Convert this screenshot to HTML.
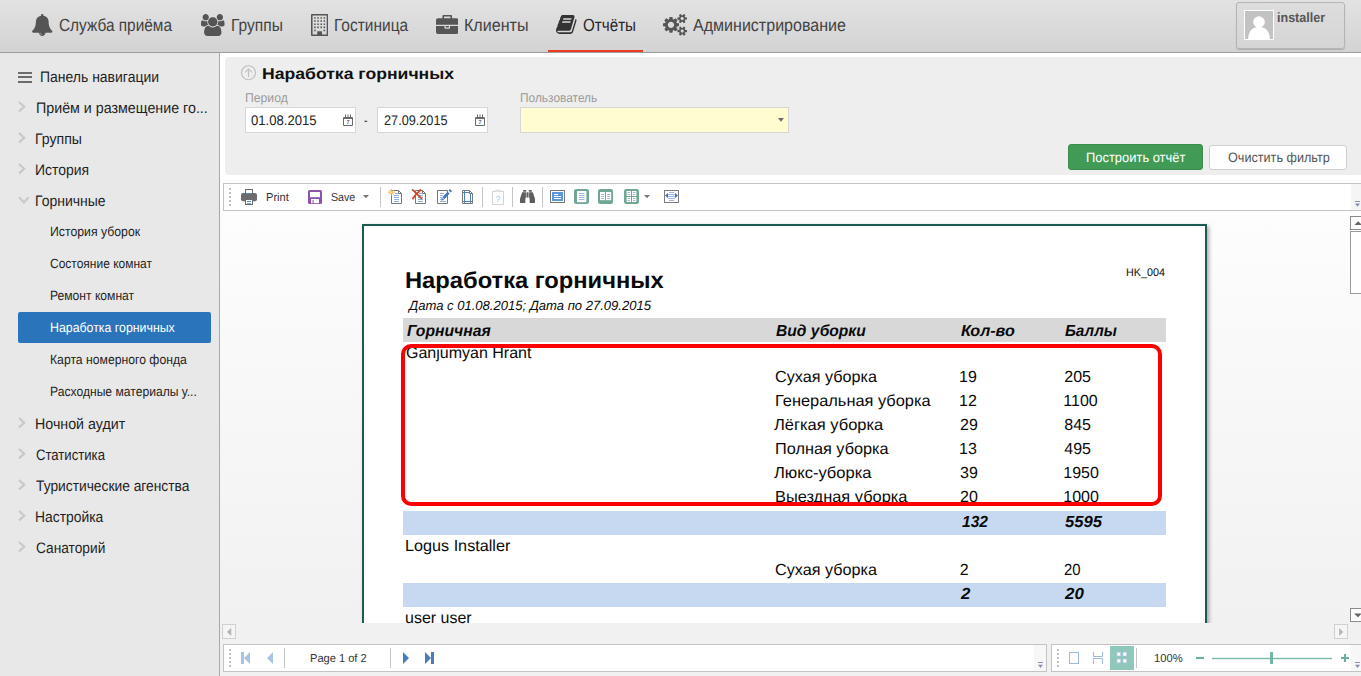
<!DOCTYPE html>
<html lang="ru">
<head>
<meta charset="utf-8">
<title>Наработка горничных</title>
<style>
*{box-sizing:border-box;margin:0;padding:0}
html,body{width:1361px;height:676px;overflow:hidden;background:#fff}
body{position:relative;font-family:"Liberation Sans",sans-serif;color:#222;font-size:14px}
.abs{position:absolute}
.t{position:absolute;white-space:nowrap;line-height:1;transform-origin:0 50%;text-rendering:geometricPrecision}
#top{left:0;top:0;width:1361px;height:53px;background:linear-gradient(#e2e2e2,#d3d3d3);border-bottom:1px solid #9d9d9d}
#actline{left:548px;top:50px;width:95px;height:2px;background:#ea3c22}
#user{left:1236px;top:2px;width:109px;height:47px;border:1px solid #b4b4b4;border-radius:3px;background:linear-gradient(#dddddd,#d5d5d5);box-shadow:0 1px 1px rgba(0,0,0,.18)}
#avatar{left:1244px;top:10px;width:30px;height:30px;background:#c2c2c2;border:1px solid #fff;overflow:hidden}
#side{left:0;top:53px;width:220px;height:623px;background:#e8e8e8;border-right:1px solid #a9a9a9}
#sel{left:18px;top:312px;width:193px;height:31px;background:#2a74bb;border-radius:2px}
#filter{left:225px;top:57px;width:1140px;height:118px;background:#eeeeee;border-radius:4px}
.inp{background:#fff;border:1px solid #d6d6d6;height:26px;top:107px}
.btn{top:144px;height:26px;border-radius:3px}
#viewer{left:220px;top:211px;width:1141px;height:465px;background:linear-gradient(#fdfdfd 0,#f1f1f1 412px,#f1f1f1 100%)}
.tb{background:#fff;border:1px solid #c3c3c3}
#canvas{left:222px;top:211px;width:1128px;height:412px;overflow:hidden}
#page{left:140px;top:13px;width:845px;height:600px;background:#fff;border:2px solid #1b5b52;box-shadow:2px 2px 4px rgba(0,0,0,.32)}
.sep{width:1px;background:#c8c8c8}
.grip{width:2px;background:repeating-linear-gradient(#b5b5b5 0 2px,transparent 2px 4px)}
.sb{background:#fff;border:1px solid #c9c9c9}
</style>
</head>
<body>
<div id="top" class="abs"></div>
<div id="actline" class="abs"></div>
<div id="user" class="abs"></div>
<div id="avatar" class="abs"><svg width="28" height="28" viewBox="0 0 28 28"><circle cx="14" cy="11" r="5.8" fill="#fff"/><path d="M3 30 C3 18 9 16 14 16 C19 16 25 18 25 30Z" fill="#fff"/></svg></div>
<div id="side" class="abs"></div>
<div id="sel" class="abs"></div>
<div id="filter" class="abs"></div>
<div class="abs inp" style="left:245px;width:111px"></div>
<div class="abs inp" style="left:377px;width:111px"></div>
<div class="abs inp" style="left:520px;width:269px;background:#fffccf"></div>
<div class="abs btn" style="left:1068px;width:135px;background:#419b57;border:1px solid #3b8d4e"></div>
<div class="abs btn" style="left:1209px;width:138px;background:#fff;border:1px solid #cfcfcf;top:145px;height:25px"></div>
<!-- viewer -->
<div id="viewer" class="abs"></div>
<div class="abs tb" style="left:223px;top:183px;width:1141px;height:28px"></div>
<div class="abs" style="left:1351px;top:184px;width:10px;height:26px;background:#f5f5f5"></div>
<div id="canvas" class="abs">
  <div id="page" class="abs"></div>
</div>
<!-- report backgrounds -->
<div class="abs" style="left:403px;top:318px;width:763px;height:24px;background:#d8d8d8"></div>
<div class="abs" style="left:403px;top:511px;width:763px;height:24px;background:#c6d9f0"></div>
<div class="abs" style="left:403px;top:583px;width:763px;height:24px;background:#c6d9f0"></div>
<!-- scrollbars -->
<div class="abs sb" style="left:1350px;top:216px;width:16px;height:14px;border-color:#8c8c8c"></div>
<div class="abs sb" style="left:1350px;top:231px;width:16px;height:63px;border-color:#9a9a9a"></div>
<div class="abs sb" style="left:1350px;top:608px;width:16px;height:14px;border-color:#8c8c8c"></div>
<div class="abs sb" style="left:222px;top:624px;width:14px;height:15px;background:#f5f5f5;border-color:#d0d0d0"></div>
<div class="abs sb" style="left:1334px;top:624px;width:14px;height:15px;background:#f5f5f5;border-color:#d0d0d0"></div>
<!-- bottom toolbars -->
<div class="abs tb" style="left:223px;top:644px;width:824px;height:28px"></div>
<div class="abs" style="left:1034px;top:645px;width:12px;height:26px;background:#f7f7f7"></div>
<div class="abs tb" style="left:1051px;top:644px;width:314px;height:28px"></div>
<div class="abs" style="left:1351px;top:645px;width:10px;height:26px;background:#f7f7f7"></div>
<div class="abs" style="left:1110px;top:646px;width:24px;height:24px;background:#8fc7ba"></div>
<svg class="abs" style="left:32px;top:13.75px;width:20.5px;height:22.0px" viewBox="64 -1536 1664 1792" preserveAspectRatio="none"><path transform="scale(1,-1)" fill="#555" d="M912 -160C912 -169 905 -176 896 -176C799 -176 720 -97 720 0C720 9 727 16 736 16C745 16 752 9 752 0C752 -79 817 -144 896 -144C905 -144 912 -151 912 -160ZM1728 128C1580 253 1408 477 1408 960C1408 1152 1249 1362 984 1401C989 1413 992 1426 992 1440C992 1493 949 1536 896 1536C843 1536 800 1493 800 1440C800 1426 803 1413 808 1401C543 1362 384 1152 384 960C384 477 212 253 64 128C64 58 122 0 192 0H640C640 -141 755 -256 896 -256C1037 -256 1152 -141 1152 0H1600C1670 0 1728 58 1728 128Z"/></svg>
<svg class="abs" style="left:201px;top:13.75px;width:23.599999999999994px;height:22.0px" viewBox="-0.006105489287108412 -1536 1920.0122109785743 1792" preserveAspectRatio="none"><path transform="scale(1,-1)" fill="#555" d="M593 640C541 715 512 805 512 896C512 918 514 940 517 962C474 947 430 939 384 939C249 939 145 1024 124 1024C-3 1024 0 752 0 671C0 560 94 512 194 512H328C395 592 489 637 593 640ZM1664 3C1664 229 1611 576 1318 576C1284 576 1160 437 960 437C760 437 636 576 602 576C309 576 256 229 256 3C256 -159 363 -256 523 -256H1397C1557 -256 1664 -159 1664 3ZM640 1280C640 1421 525 1536 384 1536C243 1536 128 1421 128 1280C128 1139 243 1024 384 1024C525 1024 640 1139 640 1280ZM1344 896C1344 1108 1172 1280 960 1280C748 1280 576 1108 576 896C576 684 748 512 960 512C1172 512 1344 684 1344 896ZM1920 671C1920 752 1923 1024 1796 1024C1775 1024 1671 939 1536 939C1490 939 1446 947 1403 962C1406 940 1408 918 1408 896C1408 805 1379 715 1327 640C1431 637 1525 592 1592 512H1726C1826 512 1920 560 1920 671ZM1792 1280C1792 1421 1677 1536 1536 1536C1395 1536 1280 1421 1280 1280C1280 1139 1395 1024 1536 1024C1677 1024 1792 1139 1792 1280Z"/></svg>
<svg class="abs" style="left:310.75px;top:13.75px;width:17.25px;height:22.0px" viewBox="0 -1536 1408 1792" preserveAspectRatio="none"><path transform="scale(1,-1)" fill="#555" d="M384 224C384 241 369 256 352 256H288C271 256 256 241 256 224V160C256 143 271 128 288 128H352C369 128 384 143 384 160ZM384 480C384 497 369 512 352 512H288C271 512 256 497 256 480V416C256 399 271 384 288 384H352C369 384 384 399 384 416ZM640 480C640 497 625 512 608 512H544C527 512 512 497 512 480V416C512 399 527 384 544 384H608C625 384 640 399 640 416ZM384 736C384 753 369 768 352 768H288C271 768 256 753 256 736V672C256 655 271 640 288 640H352C369 640 384 655 384 672ZM1152 224C1152 241 1137 256 1120 256H1056C1039 256 1024 241 1024 224V160C1024 143 1039 128 1056 128H1120C1137 128 1152 143 1152 160ZM896 480C896 497 881 512 864 512H800C783 512 768 497 768 480V416C768 399 783 384 800 384H864C881 384 896 399 896 416ZM640 736C640 753 625 768 608 768H544C527 768 512 753 512 736V672C512 655 527 640 544 640H608C625 640 640 655 640 672ZM384 992C384 1009 369 1024 352 1024H288C271 1024 256 1009 256 992V928C256 911 271 896 288 896H352C369 896 384 911 384 928ZM1152 480C1152 497 1137 512 1120 512H1056C1039 512 1024 497 1024 480V416C1024 399 1039 384 1056 384H1120C1137 384 1152 399 1152 416ZM896 736C896 753 881 768 864 768H800C783 768 768 753 768 736V672C768 655 783 640 800 640H864C881 640 896 655 896 672ZM640 992C640 1009 625 1024 608 1024H544C527 1024 512 1009 512 992V928C512 911 527 896 544 896H608C625 896 640 911 640 928ZM384 1248C384 1265 369 1280 352 1280H288C271 1280 256 1265 256 1248V1184C256 1167 271 1152 288 1152H352C369 1152 384 1167 384 1184ZM1152 736C1152 753 1137 768 1120 768H1056C1039 768 1024 753 1024 736V672C1024 655 1039 640 1056 640H1120C1137 640 1152 655 1152 672ZM896 992C896 1009 881 1024 864 1024H800C783 1024 768 1009 768 992V928C768 911 783 896 800 896H864C881 896 896 911 896 928ZM640 1248C640 1265 625 1280 608 1280H544C527 1280 512 1265 512 1248V1184C512 1167 527 1152 544 1152H608C625 1152 640 1167 640 1184ZM1152 992C1152 1009 1137 1024 1120 1024H1056C1039 1024 1024 1009 1024 992V928C1024 911 1039 896 1056 896H1120C1137 896 1152 911 1152 928ZM896 1248C896 1265 881 1280 864 1280H800C783 1280 768 1265 768 1248V1184C768 1167 783 1152 800 1152H864C881 1152 896 1167 896 1184ZM1152 1248C1152 1265 1137 1280 1120 1280H1056C1039 1280 1024 1265 1024 1248V1184C1024 1167 1039 1152 1056 1152H1120C1137 1152 1152 1167 1152 1184ZM896 -128V96C896 113 881 128 864 128H544C527 128 512 113 512 96V-128H128V1408H1280V-128ZM1408 1472C1408 1507 1379 1536 1344 1536H64C29 1536 0 1507 0 1472V-192C0 -227 29 -256 64 -256H1344C1379 -256 1408 -227 1408 -192Z"/></svg>
<svg class="abs" style="left:435.75px;top:15.3px;width:22.5px;height:18.900000000000002px" viewBox="0 -1536 1792 1536" preserveAspectRatio="none"><path transform="scale(1,-1)" fill="#555" d="M640 1280V1408H1152V1280ZM1792 640H1120V480C1120 445 1091 416 1056 416H736C701 416 672 445 672 480V640H0V160C0 72 72 0 160 0H1632C1720 0 1792 72 1792 160ZM1024 640H768V512H1024ZM1792 1120C1792 1208 1720 1280 1632 1280H1280V1440C1280 1493 1237 1536 1184 1536H608C555 1536 512 1493 512 1440V1280H160C72 1280 0 1208 0 1120V736H1792Z"/></svg>
<svg class="abs" style="left:556px;top:15.3px;width:20.5px;height:18.900000000000002px" viewBox="-0.2625092747257405 -1408 1664.3777887902443 1536" preserveAspectRatio="none"><path transform="scale(1,-1)" fill="#333" d="M1639 1058C1624 1078 1603 1092 1580 1101C1581 1083 1581 1063 1575 1044L1275 57C1264 21 1221 0 1184 0H261C206 0 137 12 117 70C109 92 110 101 118 113C127 125 143 128 156 128H1025C1152 128 1178 162 1225 316L1499 1222C1513 1269 1507 1316 1481 1352C1456 1387 1414 1408 1367 1408H606C589 1408 572 1403 555 1399L556 1402C429 1438 421 1301 379 1239C363 1216 339 1196 335 1177C332 1159 342 1142 340 1125C334 1072 294 977 270 944C255 924 233 914 226 891C220 875 230 852 228 831C223 784 188 695 161 649C151 631 132 617 127 598C122 581 132 559 127 540C116 488 82 407 52 357C36 330 15 313 11 289C9 277 18 264 17 248C16 224 12 204 10 184C-4 146 -4 102 12 57C49 -47 158 -128 260 -128H1183C1269 -128 1357 -62 1382 23L1657 929C1671 975 1664 1022 1639 1058ZM575 1056 596 1120C602 1138 621 1152 638 1152H1246C1264 1152 1274 1138 1268 1120L1247 1056C1241 1038 1222 1024 1205 1024H597C579 1024 569 1038 575 1056ZM492 800 513 864C519 882 538 896 555 896H1163C1181 896 1191 882 1185 864L1164 800C1158 782 1139 768 1122 768H514C496 768 486 782 492 800Z"/></svg>
<svg class="abs" style="left:663px;top:14px;width:24px;height:21.6px" viewBox="0 -1520 1920 1761" preserveAspectRatio="none"><path transform="scale(1,-1)" fill="#555" d="M896 640C896 499 781 384 640 384C499 384 384 499 384 640C384 781 499 896 640 896C781 896 896 781 896 640ZM1664 128C1664 58 1607 0 1536 0C1466 0 1408 57 1408 128C1408 198 1466 256 1536 256C1606 256 1664 198 1664 128ZM1664 1152C1664 1082 1607 1024 1536 1024C1466 1024 1408 1081 1408 1152C1408 1222 1466 1280 1536 1280C1606 1280 1664 1222 1664 1152ZM1280 731C1280 745 1270 758 1256 761L1104 784C1095 812 1083 839 1070 866C1098 905 1128 941 1157 980C1161 986 1164 992 1164 999C1164 1027 1046 1135 1020 1159C1014 1164 1007 1167 999 1167C992 1167 985 1165 979 1160L861 1071C837 1083 812 1094 786 1102L763 1255C761 1269 747 1280 733 1280H547C533 1280 521 1270 517 1256C504 1207 499 1152 494 1102C467 1093 442 1083 417 1070L302 1160C296 1164 289 1167 281 1167C252 1167 140 1046 120 1019C115 1013 113 1006 113 999C113 992 116 985 120 979C152 941 182 904 210 864C197 839 186 814 178 788L23 764C10 762 0 747 0 734V549C0 535 10 522 24 520L176 496C185 468 197 441 211 414C182 375 152 338 123 300C119 294 116 288 116 281C116 252 234 145 260 121C266 116 273 113 281 113C288 113 296 115 301 120L419 209C443 197 468 186 494 178L517 25C519 11 533 0 547 0H733C747 0 759 10 763 24C776 73 781 128 786 179C813 187 838 197 863 210L978 120C984 116 991 113 999 113C1028 113 1140 235 1160 262C1165 267 1167 274 1167 281C1167 289 1164 295 1160 301C1128 339 1098 376 1070 416C1083 441 1094 466 1102 492L1257 516C1270 518 1280 533 1280 546ZM1920 198C1920 213 1791 227 1771 229C1763 247 1753 265 1741 281C1750 301 1792 401 1792 419C1792 421 1791 424 1788 426C1776 433 1669 496 1664 496L1658 494C1624 460 1594 421 1566 382C1556 383 1546 384 1536 384C1526 384 1516 383 1506 382C1496 397 1421 496 1408 496C1403 496 1296 432 1284 426C1281 424 1280 421 1280 419C1280 402 1322 301 1331 281C1319 265 1309 247 1301 229C1281 227 1152 213 1152 198V58C1152 43 1281 29 1301 27C1309 8 1319 -9 1331 -25C1322 -45 1280 -146 1280 -163C1280 -165 1281 -168 1284 -170C1296 -177 1403 -241 1408 -241C1421 -241 1496 -141 1506 -126C1516 -127 1526 -128 1536 -128C1546 -128 1556 -127 1566 -126C1576 -141 1651 -241 1664 -241C1669 -241 1776 -177 1788 -170C1791 -168 1792 -166 1792 -163C1792 -145 1750 -45 1741 -25C1753 -9 1763 8 1771 27C1791 29 1920 43 1920 58ZM1920 1222C1920 1237 1791 1251 1771 1253C1763 1271 1753 1289 1741 1305C1750 1325 1792 1425 1792 1443C1792 1445 1791 1448 1788 1450C1776 1457 1669 1520 1664 1520L1658 1518C1624 1484 1594 1445 1566 1406C1556 1407 1546 1408 1536 1408C1526 1408 1516 1407 1506 1406C1496 1421 1421 1520 1408 1520C1403 1520 1296 1456 1284 1450C1281 1448 1280 1445 1280 1443C1280 1426 1322 1325 1331 1305C1319 1289 1309 1271 1301 1253C1281 1251 1152 1237 1152 1222V1082C1152 1067 1281 1053 1301 1051C1309 1032 1319 1015 1331 999C1322 979 1280 878 1280 861C1280 859 1281 856 1284 854C1296 847 1403 783 1408 783C1421 783 1496 883 1506 898C1516 897 1526 896 1536 896C1546 896 1556 897 1566 898C1576 883 1651 783 1664 783C1669 783 1776 847 1788 854C1791 856 1792 858 1792 861C1792 879 1750 979 1741 999C1753 1015 1763 1032 1771 1051C1791 1053 1920 1067 1920 1082Z"/></svg>
<svg class="abs" style="left:520px;top:190px;width:15px;height:13px" viewBox="0 -1536 1792 1792" preserveAspectRatio="none"><path transform="scale(1,-1)" fill="#5e5e5e" d="M704 1216H280C266 1216 253 1207 249 1193L0 320V-192C0 -227 29 -256 64 -256H576C611 -256 640 -227 640 -192V384C675 384 704 413 704 448ZM1024 1216H768V512H1024ZM1792 320 1543 1193C1539 1207 1526 1216 1512 1216H1088V448C1088 413 1117 384 1152 384V-192C1152 -227 1181 -256 1216 -256H1728C1763 -256 1792 -227 1792 -192ZM736 1504C736 1522 722 1536 704 1536H416C398 1536 384 1522 384 1504V1280H736ZM1408 1504C1408 1522 1394 1536 1376 1536H1088C1070 1536 1056 1522 1056 1504V1280H1408Z"/></svg>
<svg class="abs" style="left:0;top:0" width="1361" height="676" viewBox="0 0 1361 676" font-family="Liberation Sans, sans-serif">
<!-- sidebar chevrons -->
<g fill="none" stroke="#c8c8c8" stroke-width="2.1" stroke-linejoin="miter">
<path d="M19,102.0 L24.2,106.7 L19,111.4"/><path d="M19,133.0 L24.2,137.7 L19,142.4"/><path d="M19,164.0 L24.2,168.7 L19,173.4"/><path d="M19,418.0 L24.2,422.7 L19,427.4"/><path d="M19,449.0 L24.2,453.7 L19,458.4"/><path d="M19,480.0 L24.2,484.7 L19,489.4"/><path d="M19,511.0 L24.2,515.7 L19,520.4"/><path d="M19,542.0 L24.2,546.7 L19,551.4"/>
<path d="M19.2,197.4 L23.9,202.4 L28.6,197.4"/>
</g>
<g shape-rendering="crispEdges" fill="#6b6b6b"><rect x="18" y="72" width="14" height="2"/><rect x="18" y="76" width="14" height="2"/><rect x="18" y="81" width="14" height="2"/></g>
<!-- filter collapse icon -->
<g fill="none" stroke="#c0c0c0" stroke-width="1.1">
<circle cx="248.5" cy="72.7" r="7"/>
<path d="M248.5,77 V69 M245.2,72.4 L248.5,69 L251.8,72.4"/>
</g>
<!-- calendar icons -->
<g fill="none" stroke="#6a6a6a" stroke-width="1">
<path d="M343.5,117.5 H352.5 V125.5 H343.5 Z M343.5,118.5 H352.5" />
<path d="M345.5,114.5 V117 M348,114.5 V117 M350.5,114.5 V117"/>
<text x="346.4" y="124.4" font-size="5.5" font-weight="bold" fill="#6a6a6a" stroke="none">7</text>
</g>
<g fill="none" stroke="#6a6a6a" stroke-width="1" transform="translate(132,0)">
<path d="M343.5,117.5 H352.5 V125.5 H343.5 Z M343.5,118.5 H352.5" />
<path d="M345.5,114.5 V117 M348,114.5 V117 M350.5,114.5 V117"/>
<text x="346.4" y="124.4" font-size="5.5" font-weight="bold" fill="#6a6a6a" stroke="none">7</text>
</g>
<!-- combo arrow -->
<path d="M778,118 H784 L781,121.8 Z" fill="#6a6a6a"/>
<!-- ===== toolbar 1 ===== -->
<g shape-rendering="crispEdges" fill="#c2c2c2">
<rect x="229" y="188" width="2" height="2"/><rect x="229" y="192" width="2" height="2"/><rect x="229" y="196" width="2" height="2"/><rect x="229" y="200" width="2" height="2"/><rect x="229" y="204" width="2" height="2"/>
<rect x="229" y="649" width="2" height="2"/><rect x="229" y="653" width="2" height="2"/><rect x="229" y="657" width="2" height="2"/><rect x="229" y="661" width="2" height="2"/><rect x="229" y="665" width="2" height="2"/>
<rect x="1057" y="649" width="2" height="2"/><rect x="1057" y="653" width="2" height="2"/><rect x="1057" y="657" width="2" height="2"/><rect x="1057" y="661" width="2" height="2"/><rect x="1057" y="665" width="2" height="2"/>
</g>
<g shape-rendering="crispEdges" fill="#c4c4c4">
<rect x="380" y="187" width="1" height="20"/><rect x="482" y="187" width="1" height="20"/><rect x="512" y="187" width="1" height="20"/><rect x="542" y="187" width="1" height="20"/>
<rect x="284" y="648" width="1" height="20"/><rect x="390" y="648" width="1" height="20"/><rect x="1136" y="648" width="1" height="20"/>
</g>
<!-- printer -->
<rect x="241" y="193" width="16" height="8.2" rx="2" fill="#6b6b6b"/>
<rect x="245.5" y="189.5" width="7" height="4.5" fill="#fff" stroke="#6b6b6b"/>
<rect x="246" y="193" width="6" height="1" fill="#4a86c8"/>
<rect x="245.5" y="199.5" width="7" height="5" fill="#fff" stroke="#6b6b6b"/>
<rect x="247" y="201" width="4" height="1" fill="#4a86c8"/><rect x="247" y="203" width="4" height="0.8" fill="#4a86c8"/>
<!-- save -->
<rect x="308" y="190" width="14" height="14" rx="1.6" fill="#8c50ad"/>
<rect x="310" y="192" width="10" height="5.2" fill="#fff"/>
<rect x="311" y="199" width="8" height="4.2" fill="#fff"/>
<rect x="312.6" y="200" width="1" height="3.2" fill="#8c50ad"/>
<!-- dropdown arrows -->
<path d="M363,195 H369 L366,198.3 Z M644,195 H650 L647,198.3 Z" fill="#777"/>
<!-- doc icons -->
<g>
<path d="M391.5,190.5 H398.5 L401.5,193.5 V203.5 H391.5 Z" fill="#fff" stroke="#777"/>
<path d="M398.5,190.5 V193.5 H401.5" fill="none" stroke="#777"/>
<g shape-rendering="crispEdges" fill="#8fb2de"><rect x="394" y="195" width="5" height="1"/><rect x="394" y="197" width="5" height="1"/><rect x="394" y="199" width="5" height="1"/><rect x="394" y="201" width="5" height="1"/><rect x="395" y="193" width="3" height="1"/></g>
</g>
<g stroke="#e9b740" stroke-width="1"><path d="M388,192.2 H394.8 M391.4,188.9 V195.5 M389,189.8 L393.8,194.6 M393.8,189.8 L389,194.6"/></g>
<circle cx="391.4" cy="192.2" r="0.8" fill="#fff3c4"/>
<g transform="translate(24,0)">
<path d="M391.5,190.5 H398.5 L401.5,193.5 V203.5 H391.5 Z" fill="#fff" stroke="#777"/>
<path d="M398.5,190.5 V193.5 H401.5" fill="none" stroke="#777"/>
<g shape-rendering="crispEdges" fill="#8fb2de"><rect x="394" y="195" width="5" height="1"/><rect x="394" y="197" width="5" height="1"/><rect x="394" y="199" width="5" height="1"/><rect x="394" y="201" width="5" height="1"/><rect x="395" y="193" width="3" height="1"/></g>
</g>
<path d="M412.6,189.9 C415,192 418,195 421.4,198.4 M420.6,190 C417.3,192.6 414.8,195.4 412.9,198.6" stroke="#d2492a" stroke-width="1.9" fill="none" stroke-linecap="round"/>
<g>
<path d="M437.5,190.5 H447.5 V203.5 H437.5 Z" fill="#fff" stroke="#777"/>
<path d="M439.5,193.5 H444 M439.5,195.5 H443 M439.5,197.5 H441.5 M439.5,199.5 H441 M439.5,201.5 H445.5" shape-rendering="crispEdges" stroke="#8fb2de" fill="none"/>
<path d="M448.6,192.6 L443.4,198.2" stroke="#3f77bd" stroke-width="2.8" fill="none"/>
<path d="M450.9,190.1 L449.7,191.4" stroke="#3f77bd" stroke-width="3" fill="none"/>
<path d="M441.2,200.6 L441.8,197.8 L444.2,199.9 Z" fill="#3f77bd"/>
</g>
<g>
<path d="M462.5,190.5 H469.5 L472.5,193.5 V203.5 H462.5 Z" fill="#fff" stroke="#777"/>
<path d="M469.5,190.5 V193.5 H472.5" fill="none" stroke="#777"/>
<path d="M464.5,191 V203 M470.5,194 V203 M463,192.5 H469 M463,201.5 H472" stroke="#4a80c4" fill="none"/>
</g>
<!-- clipboard disabled -->
<rect x="492.5" y="191.5" width="11" height="13" fill="#fff" stroke="#d3d3d3"/>
<rect x="495" y="189.5" width="6" height="2.6" rx="1" fill="#e0e0e0"/>
<text x="495.6" y="202.2" font-size="9" fill="#a9c6e8">?</text>
<!-- binoculars -->
<!--BINO-->
<!-- icon A -->
<rect x="550.5" y="190.5" width="14" height="12" fill="#fff" stroke="#777"/>
<rect x="552" y="192" width="11" height="9" fill="#5b97dc"/>
<g shape-rendering="crispEdges" fill="#fff"><rect x="554" y="194" width="4" height="1"/><rect x="554" y="196" width="7" height="1"/><rect x="554" y="198" width="7" height="1"/></g>
<!-- icon B -->
<rect x="574" y="189" width="15" height="15" rx="2.2" fill="#6fa792"/>
<rect x="577" y="191" width="9.4" height="11.2" fill="#fff"/>
<path d="M579,193.5 H584.5 M579,195.5 H584.5 M579,197.5 H584.5 M579,199.5 H584.5" stroke="#9cb8e0" fill="none"/>
<!-- icon C -->
<rect x="598" y="189" width="15" height="15" rx="2.2" fill="#6fa792"/>
<rect x="600" y="192" width="5" height="8.2" fill="#fff"/><rect x="606" y="192" width="5.2" height="8.2" fill="#fff"/>
<path d="M601,194.5 H604 M601,196.5 H604 M601,198.5 H604 M607,194.5 H610 M607,196.5 H610 M607,198.5 H610" stroke="#9cb8e0" fill="none"/>
<!-- icon D -->
<rect x="624" y="189" width="15" height="15" rx="2.2" fill="#6fa792"/>
<rect x="626.6" y="191" width="4.4" height="5" fill="#fff"/><rect x="632" y="191" width="4.4" height="5" fill="#fff"/>
<rect x="626.6" y="197" width="4.4" height="5" fill="#fff"/><rect x="632" y="197" width="4.4" height="5" fill="#fff"/>
<path d="M627.6,192.5 H630 M627.6,194.5 H630 M633,192.5 H635.4 M633,194.5 H635.4 M627.6,198.5 H630 M627.6,200.5 H630 M633,198.5 H635.4 M633,200.5 H635.4" stroke="#9cb8e0" fill="none"/>
<!-- icon E -->
<rect x="664.5" y="190.5" width="14" height="12" fill="#fff" stroke="#7d7d7d"/>
<g shape-rendering="crispEdges" fill="#9dbbe2"><rect x="669" y="192" width="5" height="1"/><rect x="668" y="194" width="7" height="1"/><rect x="668" y="196" width="7" height="1"/><rect x="668" y="198" width="7" height="1"/><rect x="669" y="200" width="5" height="1"/></g>
<path d="M665,195.6 L668,193 V198.2 Z M678,195.6 L675,193 V198.2 Z" fill="#3f77bd"/>
<!-- overflow markers -->
<g fill="#8690ac"><rect x="1355" y="201" width="5" height="1"/><path d="M1355,203.4 H1360 L1357.5,206.8 Z"/>
<rect x="1038" y="662" width="5" height="1"/><path d="M1038,664.8 H1043 L1040.5,668 Z"/>
<rect x="1355" y="662" width="5" height="1"/><path d="M1355,664.8 H1360 L1357.5,668 Z"/></g>
<!-- scrollbar arrows -->
<path d="M1354.4,225 H1362 L1358.2,221.2 Z M1354,613.4 H1362 L1358,617.2 Z" fill="#666"/>
<path d="M231.3,627.7 V636.1 L226.9,631.9 Z M1339.1,628.1 V636 L1343.2,632 Z" fill="#b5b5b5"/>
<!-- page nav -->
<path d="M241,652 H244 V664 H241 Z M250,652 V664 L244,658 Z M273,652 V664 L267,658 Z" fill="#a9c4e0"/>
<path d="M403,652 V664 L409,658 Z M425,652 V664 L431,658 Z M431,652 H434 V664 H431 Z" fill="#4a7eba"/>
<!-- view mode icons -->
<rect x="1069.5" y="652.5" width="9" height="11" fill="none" stroke="#9db8dc"/>
<path d="M1093.5,652 V656.5 H1102.5 V652 M1093.5,664 V658.5 H1102.5 V664" fill="none" stroke="#9db8dc"/>
<g fill="#fff" stroke="#b5c4e6" stroke-width="0.6"><rect x="1117" y="652.2" width="3.6" height="3.8"/><rect x="1123" y="652.2" width="3.6" height="3.8"/><rect x="1117" y="659" width="3.6" height="3.8"/><rect x="1123" y="659" width="3.6" height="3.8"/></g>
<!-- zoom slider -->
<rect x="1196" y="657" width="8" height="2" fill="#66b1a1"/>
<rect x="1212" y="657.8" width="120" height="1.4" fill="#7cb9ad"/>
<rect x="1270" y="652" width="3" height="12" fill="#73b5a7"/>
<path d="M1341,657 H1349 V659 H1341 Z M1344,654 H1346 V662 H1344 Z" fill="#66b1a1"/>
</svg>

<span class="t" style="left:58.75px;top:17px;font-size:17.5px;color:#424242;transform:scaleX(0.8802);">Служба приёма</span>
<span class="t" style="left:231.11px;top:17px;font-size:17.5px;color:#424242;transform:scaleX(0.8901);">Группы</span>
<span class="t" style="left:333.61px;top:17px;font-size:17.5px;color:#424242;transform:scaleX(0.8851);">Гостиница</span>
<span class="t" style="left:463.58px;top:17px;font-size:17.5px;color:#424242;transform:scaleX(0.9185);">Клиенты</span>
<span class="t" style="left:582.50px;top:17px;font-size:17.5px;color:#262626;transform:scaleX(0.8679);">Отчёты</span>
<span class="t" style="left:693.25px;top:17px;font-size:17.5px;color:#424242;transform:scaleX(0.9164);">Администрирование</span>
<span class="t" style="left:1277.40px;top:11px;font-size:13.5px;color:#565656;font-weight:bold;transform:scaleX(0.9292);">installer</span>
<span class="t" style="left:39.99px;top:70px;font-size:15.3px;color:#1f1f1f;transform:scaleX(0.9132);">Панель навигации</span>
<span class="t" style="left:35.66px;top:101px;font-size:15.2px;color:#1f1f1f;transform:scaleX(0.9395);">Приём и размещение го...</span>
<span class="t" style="left:35.47px;top:132px;font-size:15.2px;color:#1f1f1f;transform:scaleX(0.9284);">Группы</span>
<span class="t" style="left:35.48px;top:163px;font-size:15.2px;color:#1f1f1f;transform:scaleX(0.9190);">История</span>
<span class="t" style="left:35.48px;top:194px;font-size:15.2px;color:#1f1f1f;transform:scaleX(0.9217);">Горничные</span>
<span class="t" style="left:49.68px;top:225px;font-size:13.4px;color:#1f1f1f;transform:scaleX(0.9158);">История уборок</span>
<span class="t" style="left:49.90px;top:257px;font-size:13.4px;color:#1f1f1f;transform:scaleX(0.8950);">Состояние комнат</span>
<span class="t" style="left:49.70px;top:289px;font-size:13.4px;color:#1f1f1f;transform:scaleX(0.9042);">Ремонт комнат</span>
<span class="t" style="left:49.68px;top:321px;font-size:13.4px;color:#fff;transform:scaleX(0.9217);">Наработка горничных</span>
<span class="t" style="left:49.69px;top:353px;font-size:13.4px;color:#1f1f1f;transform:scaleX(0.9108);">Карта номерного фонда</span>
<span class="t" style="left:49.70px;top:385px;font-size:13.4px;color:#1f1f1f;transform:scaleX(0.9050);">Расходные материалы у...</span>
<span class="t" style="left:35.46px;top:417px;font-size:15.2px;color:#1f1f1f;transform:scaleX(0.9376);">Ночной аудит</span>
<span class="t" style="left:36.40px;top:448px;font-size:15.2px;color:#1f1f1f;transform:scaleX(0.8641);">Статистика</span>
<span class="t" style="left:36.40px;top:479px;font-size:15.2px;color:#1f1f1f;transform:scaleX(0.9080);">Туристические агенства</span>
<span class="t" style="left:35.49px;top:510px;font-size:15.2px;color:#1f1f1f;transform:scaleX(0.9136);">Настройка</span>
<span class="t" style="left:36.40px;top:541px;font-size:15.2px;color:#1f1f1f;transform:scaleX(0.9036);">Санаторий</span>
<span class="t" style="left:261.88px;top:67px;font-size:15.7px;color:#111;font-weight:bold;transform:scaleX(1.1220);">Наработка горничных</span>
<span class="t" style="left:244.53px;top:92px;font-size:12.6px;color:#9b9b9b;transform:scaleX(0.9698);">Период</span>
<span class="t" style="left:519.80px;top:92px;font-size:12.6px;color:#9b9b9b;transform:scaleX(0.9456);">Пользователь</span>
<span class="t" style="left:251.25px;top:113px;font-size:14px;color:#222;transform:scaleX(0.9355);">01.08.2015</span>
<span class="t" style="left:383.75px;top:113px;font-size:14px;color:#222;transform:scaleX(0.9071);">27.09.2015</span>
<span class="t" style="left:364.40px;top:113px;font-size:14px;color:#333;transform:scaleX(0.7600);">-</span>
<span class="t" style="left:1085.65px;top:151px;font-size:13.6px;color:#fff;transform:scaleX(0.9508);">Построить отчёт</span>
<span class="t" style="left:1227.60px;top:151px;font-size:13.6px;color:#555;transform:scaleX(0.9292);">Очистить фильтр</span>
<span class="t" style="left:265.50px;top:193px;font-size:11.5px;color:#333;transform:scaleX(0.9652);">Print</span>
<span class="t" style="left:331.10px;top:193px;font-size:11.5px;color:#333;transform:scaleX(0.9258);">Save</span>
<span class="t" style="left:309.50px;top:654px;font-size:11.5px;color:#333;transform:scaleX(0.9627);">Page 1 of 2</span>
<span class="t" style="left:1154.00px;top:654px;font-size:11.5px;color:#333;transform:scaleX(0.9730);">100%</span>
<span class="t" style="left:404.97px;top:269px;font-size:23px;color:#0a0a0a;font-weight:bold;transform:scaleX(1.0309);">Наработка горничных</span>
<span class="t" style="left:1125.50px;top:268px;font-size:11px;color:#0a0a0a;transform:scaleX(0.9790);">HK_004</span>
<span class="t" style="left:409.26px;top:299px;font-size:13.3px;color:#0a0a0a;font-style:italic;transform:scaleX(0.9804);">Дата с 01.08.2015; Дата по 27.09.2015</span>
<span class="t" style="left:406.50px;top:324px;font-size:16px;color:#0a0a0a;font-weight:bold;font-style:italic;transform:scaleX(0.9814);">Горничная</span>
<span class="t" style="left:775.60px;top:324px;font-size:16px;color:#0a0a0a;font-weight:bold;font-style:italic;transform:scaleX(0.9749);">Вид уборки</span>
<span class="t" style="left:960.50px;top:324px;font-size:16px;color:#0a0a0a;font-weight:bold;font-style:italic;transform:scaleX(1.0085);">Кол-во</span>
<span class="t" style="left:1064.90px;top:324px;font-size:16px;color:#0a0a0a;font-weight:bold;font-style:italic;transform:scaleX(0.9590);">Баллы</span>
<span class="t" style="left:406.00px;top:346px;font-size:16px;color:#0a0a0a;">Ganjumyan Hrant</span>
<span class="t" style="left:775.00px;top:370px;font-size:16px;color:#0a0a0a;transform:scaleX(1.0112);">Сухая уборка</span>
<span class="t" style="left:959.00px;top:370px;font-size:16px;color:#0a0a0a;">19</span>
<span class="t" style="left:1064.30px;top:370px;font-size:16px;color:#0a0a0a;">205</span>
<span class="t" style="left:774.58px;top:394px;font-size:16px;color:#0a0a0a;transform:scaleX(1.0243);">Генеральная уборка</span>
<span class="t" style="left:959.00px;top:394px;font-size:16px;color:#0a0a0a;">12</span>
<span class="t" style="left:1063.30px;top:394px;font-size:16px;color:#0a0a0a;">1100</span>
<span class="t" style="left:774.30px;top:418px;font-size:16px;color:#0a0a0a;transform:scaleX(1.0312);">Лёгкая уборка</span>
<span class="t" style="left:960.00px;top:418px;font-size:16px;color:#0a0a0a;">29</span>
<span class="t" style="left:1064.30px;top:418px;font-size:16px;color:#0a0a0a;">845</span>
<span class="t" style="left:774.58px;top:442px;font-size:16px;color:#0a0a0a;transform:scaleX(1.0179);">Полная уборка</span>
<span class="t" style="left:959.00px;top:442px;font-size:16px;color:#0a0a0a;">13</span>
<span class="t" style="left:1064.30px;top:442px;font-size:16px;color:#0a0a0a;">495</span>
<span class="t" style="left:774.30px;top:466px;font-size:16px;color:#0a0a0a;transform:scaleX(1.0328);">Люкс-уборка</span>
<span class="t" style="left:960.00px;top:466px;font-size:16px;color:#0a0a0a;">39</span>
<span class="t" style="left:1063.30px;top:466px;font-size:16px;color:#0a0a0a;">1950</span>
<span class="t" style="left:774.58px;top:490px;font-size:16px;color:#0a0a0a;transform:scaleX(1.0243);">Выездная уборка</span>
<span class="t" style="left:960.00px;top:490px;font-size:16px;color:#0a0a0a;">20</span>
<span class="t" style="left:1063.30px;top:490px;font-size:16px;color:#0a0a0a;">1000</span>
<span class="t" style="left:962.30px;top:515px;font-size:16px;color:#0a0a0a;font-weight:bold;font-style:italic;transform:scaleX(0.9740);">132</span>
<span class="t" style="left:1065.00px;top:515px;font-size:16px;color:#0a0a0a;font-weight:bold;font-style:italic;transform:scaleX(1.0410);">5595</span>
<span class="t" style="left:404.69px;top:539px;font-size:16px;color:#0a0a0a;transform:scaleX(1.0122);">Logus Installer</span>
<span class="t" style="left:775.00px;top:563px;font-size:16px;color:#0a0a0a;transform:scaleX(1.0112);">Сухая уборка</span>
<span class="t" style="left:959.80px;top:563px;font-size:16px;color:#0a0a0a;">2</span>
<span class="t" style="left:1063.90px;top:563px;font-size:16px;color:#0a0a0a;transform:scaleX(0.9275);">20</span>
<span class="t" style="left:960.85px;top:587px;font-size:16px;color:#0a0a0a;font-weight:bold;font-style:italic;transform:scaleX(1.0500);">2</span>
<span class="t" style="left:1065.26px;top:587px;font-size:16px;color:#0a0a0a;font-weight:bold;font-style:italic;transform:scaleX(1.0583);">20</span>
<span class="t" style="left:405.00px;top:611px;font-size:16px;color:#0a0a0a;">user user</span>
<!-- red annotation -->
<div class="abs" style="left:401px;top:344px;width:761px;height:162px;border:4px solid #fc0000;border-radius:10px"></div>
</body>
</html>
